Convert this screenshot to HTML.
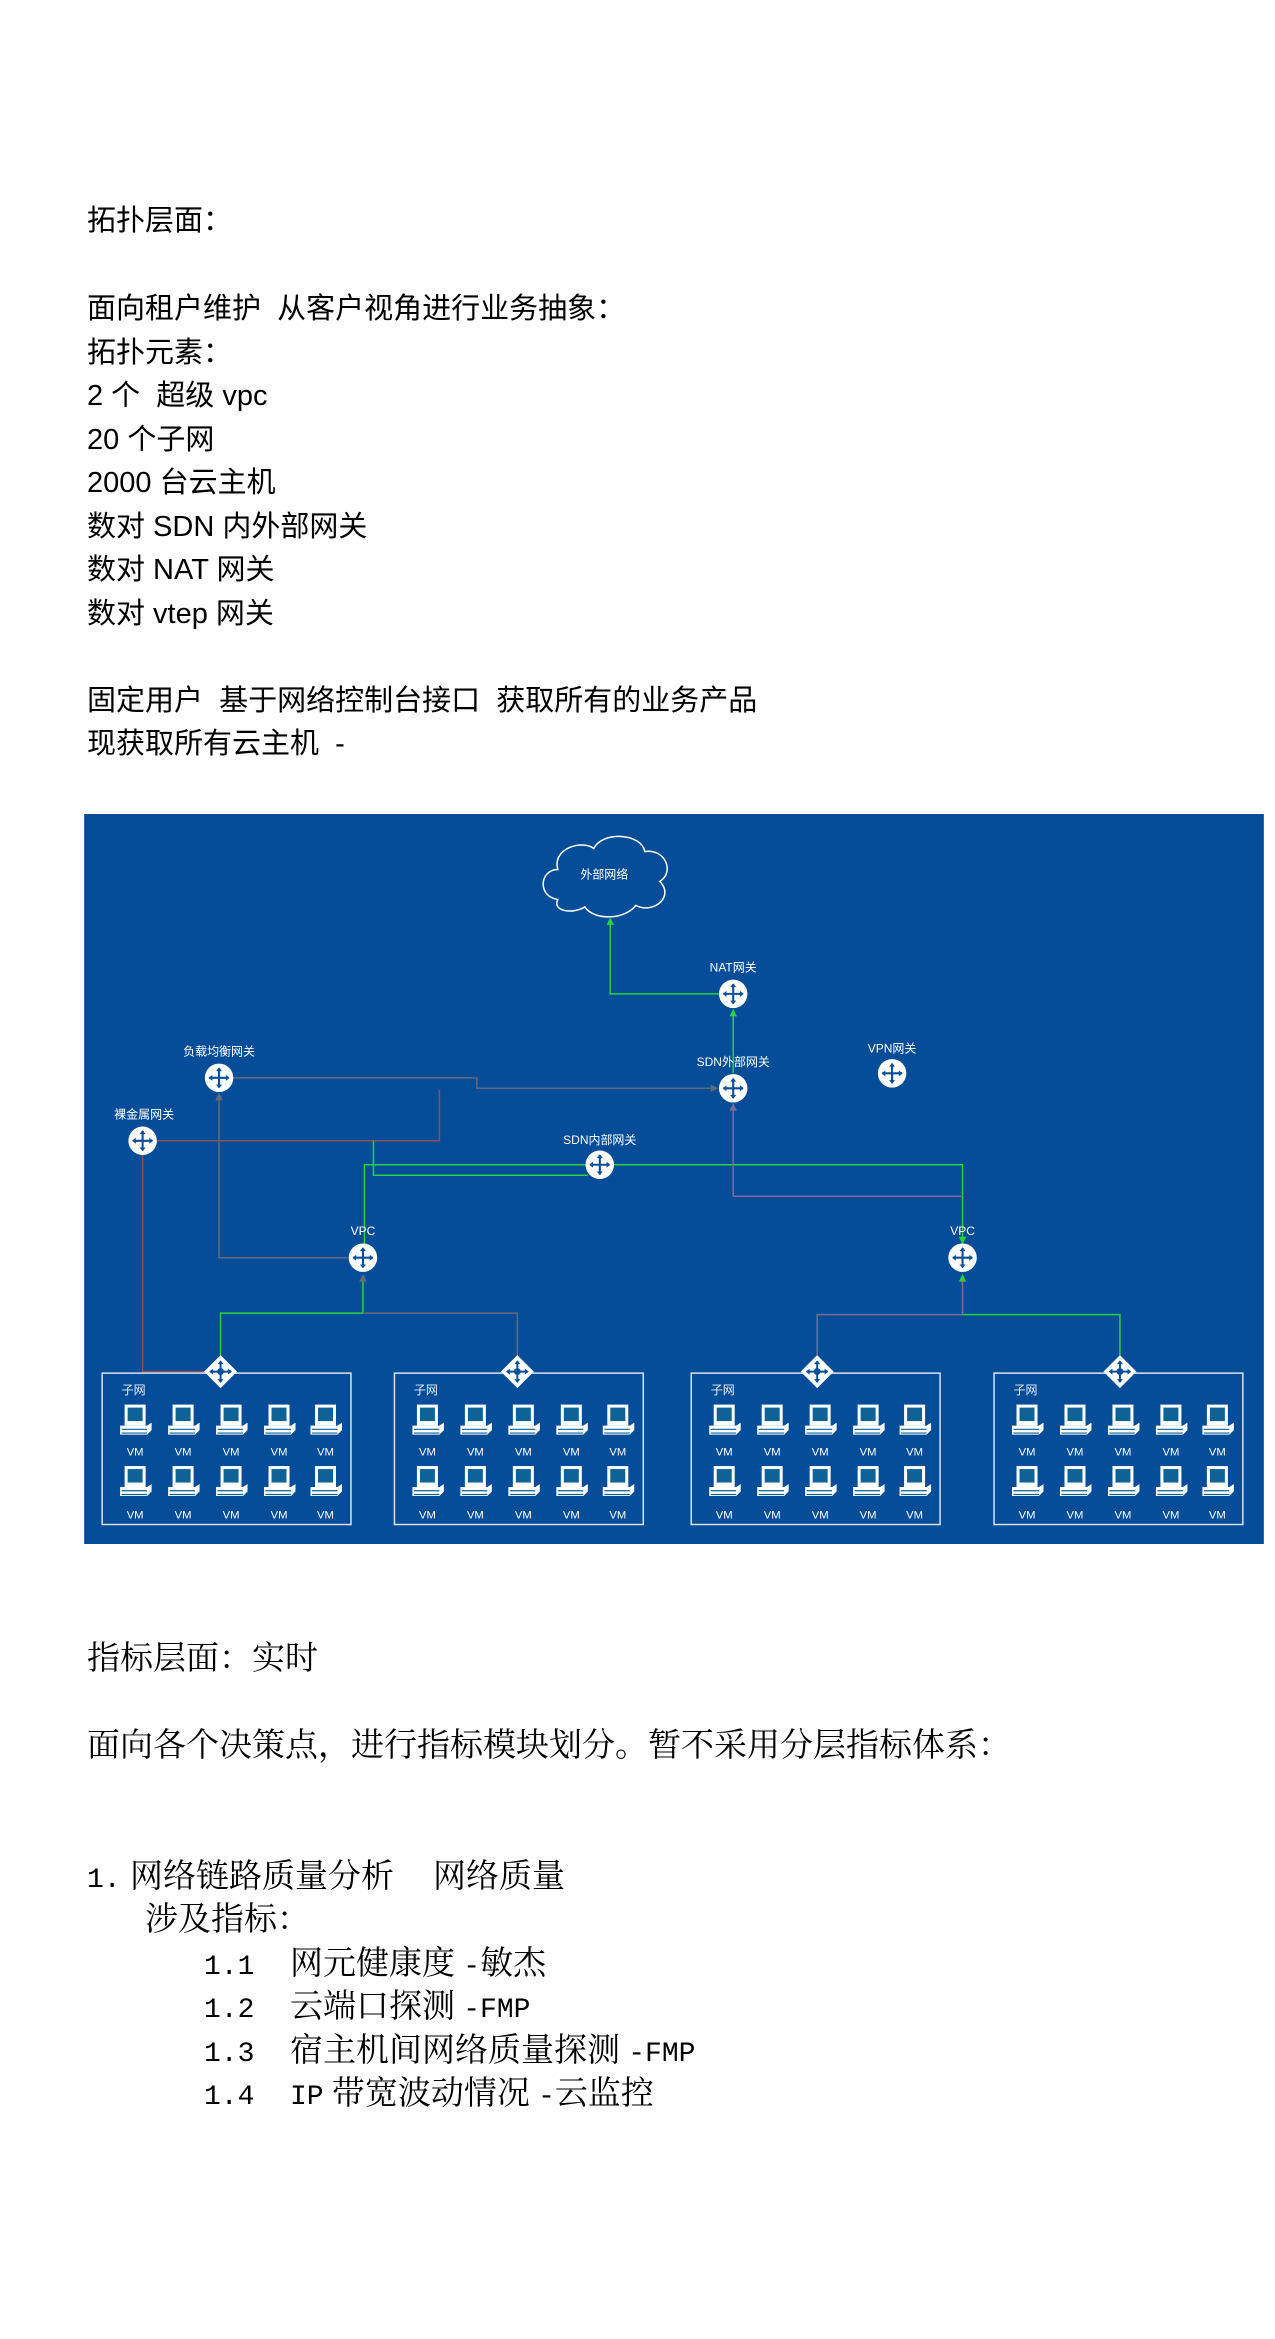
<!DOCTYPE html>
<html><head><meta charset="utf-8">
<style>
html,body{margin:0;padding:0;background:#fff;}
body{width:1275px;height:2339px;position:relative;overflow:hidden;}
.t{position:absolute;left:87px;font-family:"Liberation Sans","Noto Sans CJK SC",sans-serif;font-size:29px;line-height:40px;height:40px;color:#000;white-space:pre;}
.s{position:absolute;font-family:"Liberation Serif","Noto Serif CJK SC",serif;font-size:33px;line-height:40px;height:40px;color:#000;white-space:pre;}
.m{font-family:"Liberation Mono",monospace;font-size:28px;}
svg{position:absolute;left:84px;top:814px;}
</style></head><body>
<div class="t" style="top:201px">拓扑层面：</div>
<div class="t" style="top:289px">面向租户维护  从客户视角进行业务抽象：</div>
<div class="t" style="top:333px">拓扑元素：</div>
<div class="t" style="top:376px">2 个  超级 vpc</div>
<div class="t" style="top:420px">20 个子网</div>
<div class="t" style="top:463px">2000 台云主机</div>
<div class="t" style="top:507px">数对 SDN 内外部网关</div>
<div class="t" style="top:550px">数对 NAT 网关</div>
<div class="t" style="top:594px">数对 vtep 网关</div>
<div class="t" style="top:681px">固定用户  基于网络控制台接口  获取所有的业务产品</div>
<div class="t" style="top:724px">现获取所有云主机  -</div>

<svg width="1180" height="730" viewBox="56 543 787 487" font-family="Liberation Sans,Noto Sans CJK SC,sans-serif">
<defs>
<g id="rt"><circle r="9.5" fill="#fff"/><path d="M-6.5 0H6.5M0 -6.5V6.5" stroke="#0a4f9a" stroke-width="1.4"/><path d="M-7 0l2.5-2v4zM7 0l-2.5-2v4zM0 -7l-2 2.5h4zM0 7l-2-2.5h4z" fill="#0a4f9a"/></g>
<g id="dm"><polygon points="0,-11 11,0 0,11 -11,0" fill="#fff"/><path d="M-7 0H7M0 -7V7" stroke="#0a4f9a" stroke-width="1.3"/><path d="M-7.5 0l2.5-2v4zM7.5 0l-2.5-2v4zM0 -7.5l-2 2.5h4zM0 7.5l-2-2.5h4z" fill="#0a4f9a"/><circle r="2.3" fill="#0a4f9a"/></g>
<g id="vm"><rect x="-7" y="-12" width="14" height="14" fill="#fff"/><rect x="-5" y="-10" width="10" height="9" fill="#0e6296"/><path d="M-10 2h18l3-2v5l-3 3h-18z" fill="#fff"/><path d="M-9 4.5h17M-9 7h17" stroke="#0e6296" stroke-width="0.8"/></g>
<g id="sb"><rect x="0" y="0" width="166" height="101" fill="none" stroke="#d8e2f0" stroke-width="1"/><text x="13" y="14" font-size="8" fill="#e6eefa">子网</text>
<g font-size="7.5" fill="#fff" text-anchor="middle">
<use href="#vm" x="22" y="33"/><use href="#vm" x="54" y="33"/><use href="#vm" x="86" y="33"/><use href="#vm" x="118" y="33"/><use href="#vm" x="149" y="33"/>
<text x="22" y="55">VM</text><text x="54" y="55">VM</text><text x="86" y="55">VM</text><text x="118" y="55">VM</text><text x="149" y="55">VM</text>
<use href="#vm" x="22" y="74"/><use href="#vm" x="54" y="74"/><use href="#vm" x="86" y="74"/><use href="#vm" x="118" y="74"/><use href="#vm" x="149" y="74"/>
<text x="22" y="97">VM</text><text x="54" y="97">VM</text><text x="86" y="97">VM</text><text x="118" y="97">VM</text><text x="149" y="97">VM</text>
</g></g>
</defs>
<rect x="56" y="543" width="787" height="487" fill="#054d98"/>
<path d="M372 600 C358 598 360 580 372 580 C368 566 388 560 396 566 C402 554 428 556 430 568 C444 566 450 582 440 588 C450 598 436 610 424 604 C416 614 396 614 390 605 C382 610 368 608 372 600Z" fill="#054d98" stroke="#fff" stroke-width="1"/>
<text x="403" y="586" font-size="8" fill="#fff" text-anchor="middle">外部网络</text>
<g fill="none" stroke-width="1">
<path d="M489 663H407V614" stroke="#2bd13a"/>
<path d="M489 716V675" stroke="#2bd13a"/>
<path d="M146 719H318V726H478" stroke="#666a78"/>
<path d="M95 761H293V727" stroke="#8a4f5a"/>
<path d="M95 768V915H136" stroke="#8a4f5a"/>
<path d="M146 730V839H232" stroke="#666a78"/>
<path d="M243 839V777H642V832" stroke="#2bd13a"/>
<path d="M249 761V784H392" stroke="#2bd13a"/>
<path d="M489 737V798H642" stroke="#7a6a98"/>
<path d="M242 851V876H147V904" stroke="#2bd13a"/>
<path d="M242 876H345V904" stroke="#666a78"/>
<path d="M642 851V877H545V904" stroke="#7a6a98"/>
<path d="M642 877H747V904" stroke="#2bd13a"/>
</g>
<g>
<path d="M407 612l-2.5 5h5z" fill="#2bd13a"/>
<path d="M489 673l-2.5 5h5z" fill="#2bd13a"/>
<path d="M479 726l-5-2.5v5z" fill="#666a78"/>
<path d="M146 729l-2.5 5h5z" fill="#666a78"/>
<path d="M489 736l-2.5 5h5z" fill="#7a6a98"/>
<path d="M242 850l-2.5 5h5z" fill="#666a78"/>
<path d="M642 850l-2.5 5h5z" fill="#2bd13a"/>
<path d="M642 830l-2.5 -5h5z" fill="#2bd13a"/>
</g>
<use href="#rt" x="489" y="663"/><use href="#rt" x="489" y="726"/><use href="#rt" x="595" y="716"/>
<use href="#rt" x="146" y="719"/><use href="#rt" x="95" y="761"/><use href="#rt" x="400" y="777"/>
<use href="#rt" x="242" y="839"/><use href="#rt" x="642" y="839"/>
<g font-size="8" fill="#fff" text-anchor="middle">
<text x="489" y="648">NAT网关</text><text x="489" y="711">SDN外部网关</text><text x="595" y="702">VPN网关</text>
<text x="146" y="704">负载均衡网关</text><text x="96" y="746">裸金属网关</text><text x="400" y="763">SDN内部网关</text>
<text x="242" y="824">VPC</text><text x="642" y="824">VPC</text>
</g>
<use href="#sb" x="68" y="916"/><use href="#sb" x="263" y="916"/><use href="#sb" x="461" y="916"/><use href="#sb" x="663" y="916"/>
<use href="#dm" x="147" y="915"/><use href="#dm" x="345" y="915"/><use href="#dm" x="545" y="915"/><use href="#dm" x="747" y="915"/>
</svg>

<div class="s" style="left:87px;top:1639px">指标层面：实时</div>
<div class="s" style="left:87px;top:1726px">面向各个决策点，进行指标模块划分。暂不采用分层指标体系：</div>
<div class="s" style="left:87px;top:1857px"><span class="m">1.</span></div><div class="s" style="left:130px;top:1857px">网络链路质量分析</div><div class="s" style="left:433px;top:1857px">网络质量</div>
<div class="s" style="left:145px;top:1900px">涉及指标：</div>
<div class="s" style="left:204px;top:1944px"><span class="m">1.1</span></div><div class="s" style="left:290px;top:1944px">网元健康度 <span class="m">-</span>敏杰</div>
<div class="s" style="left:204px;top:1987px"><span class="m">1.2</span></div><div class="s" style="left:290px;top:1987px">云端口探测 <span class="m">-FMP</span></div>
<div class="s" style="left:204px;top:2031px"><span class="m">1.3</span></div><div class="s" style="left:290px;top:2031px">宿主机间网络质量探测 <span class="m">-FMP</span></div>
<div class="s" style="left:204px;top:2074px"><span class="m">1.4</span></div><div class="s" style="left:290px;top:2074px"><span class="m">IP</span> 带宽波动情况 <span class="m">-</span>云监控</div>
</body></html>
